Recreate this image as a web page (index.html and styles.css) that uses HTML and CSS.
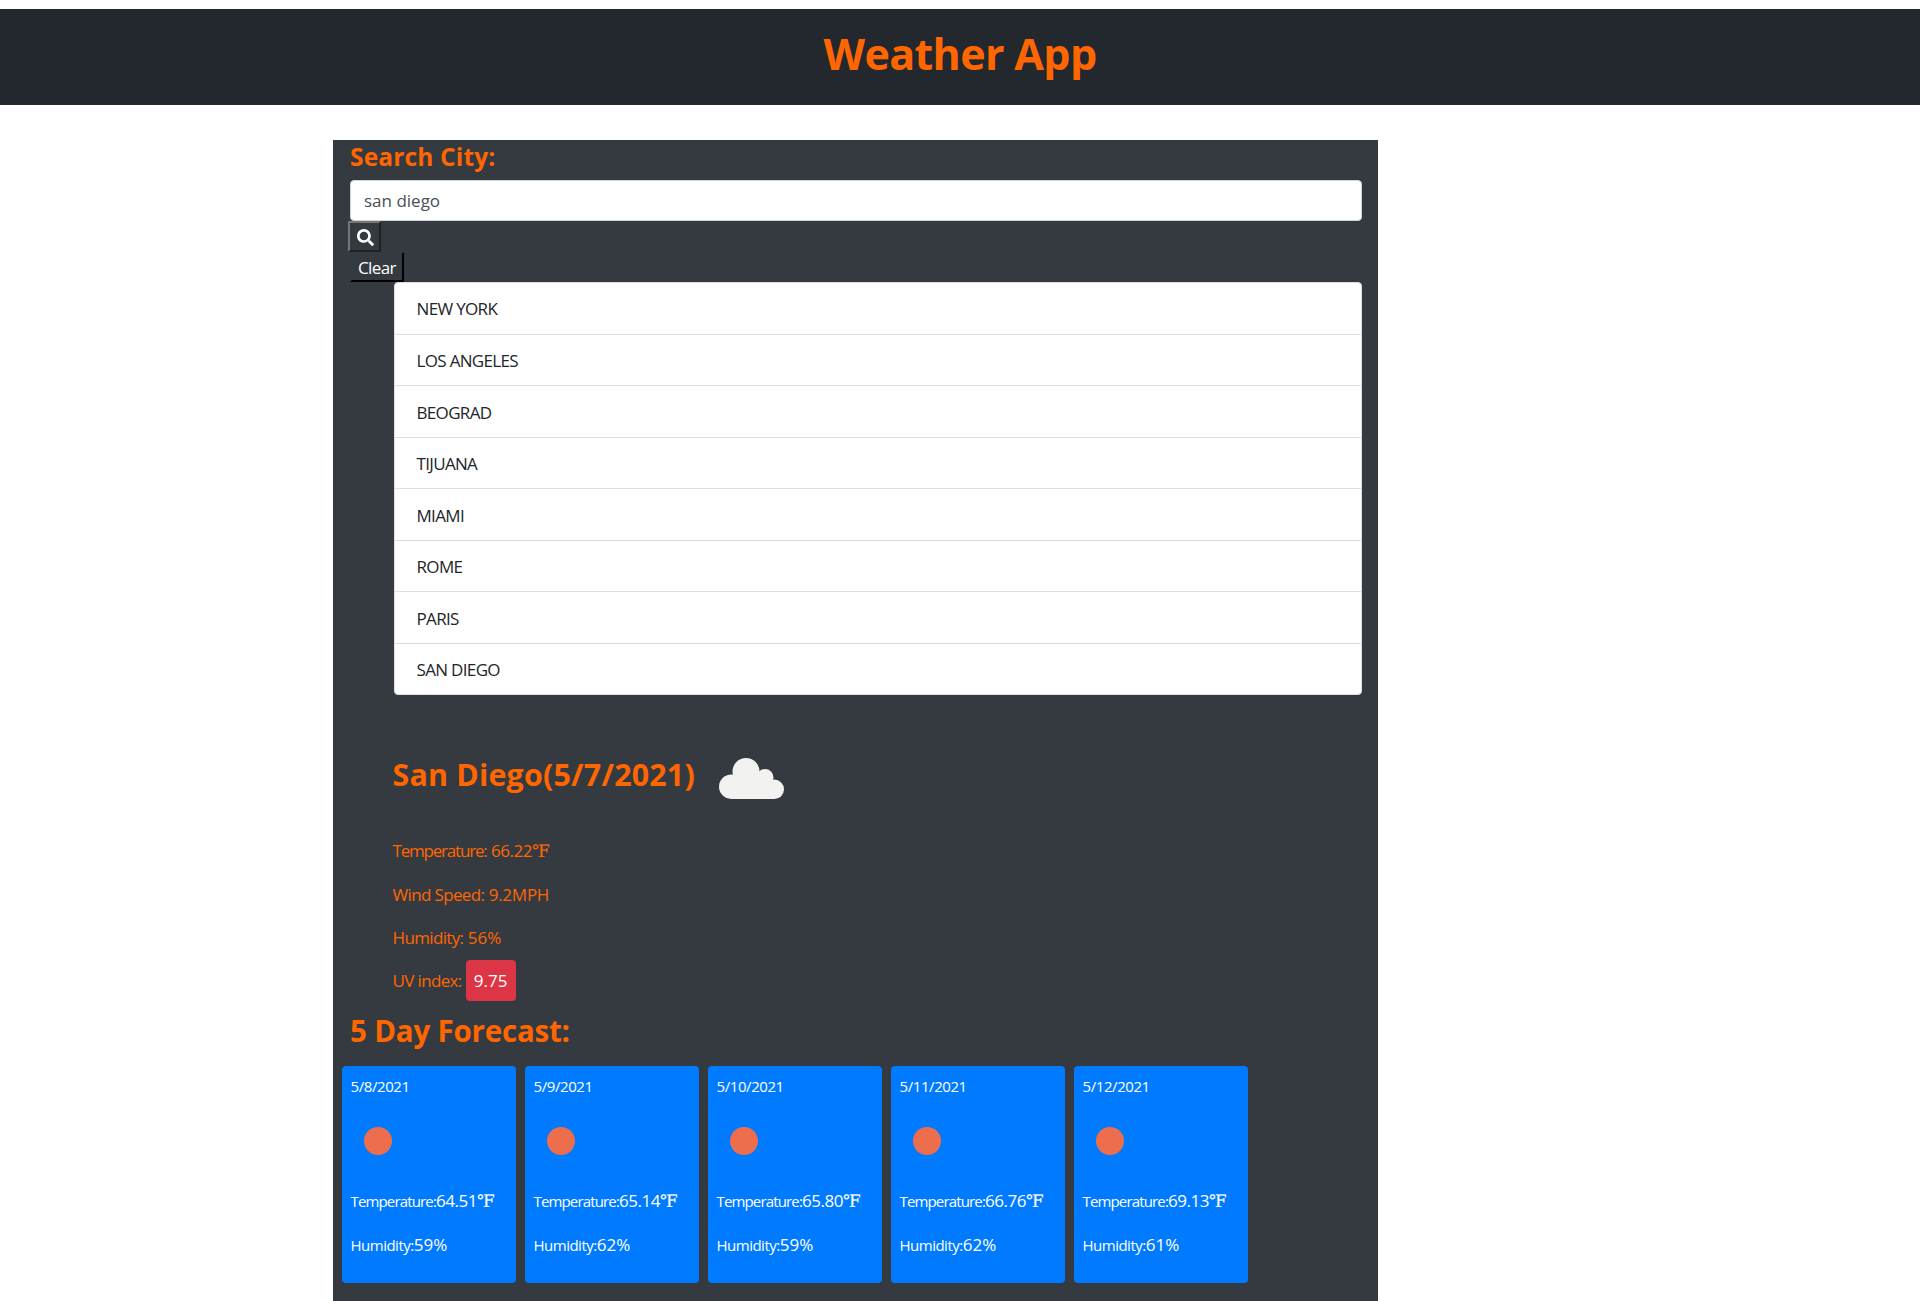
FILE: index.html
```html
<!DOCTYPE html>
<html lang="en">
<head>
<meta charset="utf-8">
<title>Weather App</title>
<link rel="stylesheet" href="styles.css">
</head>
<body>
<header class="header"><h1 class="title">Weather App</h1></header>
<main class="panel">
  <section class="search">
    <h2 class="search-label">Search City:</h2>
    <input class="city-input" type="text" value="san diego" aria-label="City">
    <button class="search-btn" aria-label="Search"><svg viewBox="0 0 512 512"><path fill="#fff" d="M505 442.7L405.3 343c-4.500-4.500-10.600-7-17-7H372c27.600-35.300 44-79.700 44-128C416 93.100 322.900 0 208 0S0 93.100 0 208s93.100 208 208 208c48.300 0 92.700-16.400 128-44v16.300c0 6.400 2.500 12.500 7 17l99.700 99.700c9.400 9.400 24.600 9.400 33.900 0l28.300-28.300c9.400-9.400 9.400-24.600.1-34zM208 336c-70.700 0-128-57.200-128-128 0-70.700 57.200-128 128-128 70.700 0 128 57.200 128 128 0 70.700-57.200 128-128 128z"/></svg></button>
    <button class="clear-btn">Clear</button>
    <ul class="cities">
      <li>NEW YORK</li>
      <li>LOS ANGELES</li>
      <li>BEOGRAD</li>
      <li>TIJUANA</li>
      <li>MIAMI</li>
      <li>ROME</li>
      <li>PARIS</li>
      <li>SAN DIEGO</li>
    </ul>
  </section>
  <section class="current">
    <div class="current-head">
      <h3 class="current-city">San Diego(5/7/2021)</h3>
      <svg class="cloud" viewBox="0 0 65 41"><g fill="#f2f2f0"><circle cx="12.200" cy="28.700" r="12.200"/><circle cx="27" cy="13.500" r="13.500"/><circle cx="46" cy="19.500" r="8.500"/><circle cx="55.300" cy="31.300" r="9.700"/><path d="M12 41V28L20 16H46L55.500 30V41Z"/></g></svg>
    </div>
    <p class="stat"><span class="temp-key">Temperature:</span> <span class="temp-val">66.22</span><span class="deg">℉</span></p>
    <p class="stat"><span class="stat-key">Wind Speed:</span> <span class="wind-val">9.2MPH</span></p>
    <p class="stat"><span class="stat-key">Humidity:</span> 56%</p>
    <p class="stat uv"><span class="stat-key">UV index:</span><span class="badge">9.75</span></p>
  </section>
  <section class="forecast">
    <h3 class="forecast-title">5 Day Forecast:</h3>
    <div class="cards">
      <article class="card"><p class="date">5/8/2021</p><div class="sun"></div><p class="row"><span class="key key-temp">Temperature:</span><span class="temp-val">64.51</span><span class="deg">℉</span></p><p class="row"><span class="key">Humidity:</span>59%</p></article>
      <article class="card"><p class="date">5/9/2021</p><div class="sun"></div><p class="row"><span class="key key-temp">Temperature:</span><span class="temp-val">65.14</span><span class="deg">℉</span></p><p class="row"><span class="key">Humidity:</span>62%</p></article>
      <article class="card"><p class="date">5/10/2021</p><div class="sun"></div><p class="row"><span class="key key-temp">Temperature:</span><span class="temp-val">65.80</span><span class="deg">℉</span></p><p class="row"><span class="key">Humidity:</span>59%</p></article>
      <article class="card"><p class="date">5/11/2021</p><div class="sun"></div><p class="row"><span class="key key-temp">Temperature:</span><span class="temp-val">66.76</span><span class="deg">℉</span></p><p class="row"><span class="key">Humidity:</span>62%</p></article>
      <article class="card"><p class="date">5/12/2021</p><div class="sun"></div><p class="row"><span class="key key-temp">Temperature:</span><span class="temp-val">69.13</span><span class="deg">℉</span></p><p class="row"><span class="key">Humidity:</span>61%</p></article>
    </div>
  </section>
</main>
</body>
</html>
```
FILE: styles.css
```css
* { box-sizing: border-box; }
body {
  margin: 0;
  height: 1301px;
  overflow: hidden;
  padding-top: 9px;
  display: flex;
  flex-direction: column;
  background: #fff;
  color: #ff6600;
  font: 17px/26px "Open Sans", "Noto Sans", sans-serif;
}
h1, h2, h3, p, ul { margin: 0; padding: 0; font-weight: 700; }
p { font-weight: 400; }
.header { height: 96px; flex: none; background: #23272e; text-align: center; }
.title { font-size: 43px; line-height: 60px; padding-top: 15px; letter-spacing: -0.65px; }
.panel { flex: 1; width: 1045px; margin: 35px 0 0 333px; background: #343a40; }
.search { display: flex; flex-direction: column; align-items: flex-start; padding: 0 16px 0 17px; }
.search-label { font-size: 24.5px; line-height: 34px; height: 40px; letter-spacing: 0.15px; }
.city-input {
  width: 100%; height: 41px; padding: 0 13px;
  border: 1px solid #ced4da; border-radius: 4px; background: #fff;
  color: #495057; font: inherit; outline: 0;
}
.search-btn {
  width: 33px; height: 31px; margin-left: -2px; padding: 1px 0 0 1px;
  display: grid; place-items: center;
  border: 2px solid; border-color: #767676 #212121 #212121 #767676;
  background: #343a40;
}
.search-btn svg { width: 17px; height: 17px; display: block; }
.clear-btn {
  width: 54px; height: 30px; padding: 1px 0 0;
  border: 2px solid; border-color: #343a40 #000 #000 #343a40;
  background: #343a40; color: #fff; font: inherit; line-height: 25px; letter-spacing: -0.6px;
}
.cities {
  align-self: stretch; margin-left: 44px; height: 413px; list-style: none;
  display: grid; grid-template-rows: 51.75px repeat(6, 51.5px) 1fr;
  border: 1px solid #dfdfdf; border-radius: 4px; background: #fff; color: #212529;
  font-weight: 400; letter-spacing: -0.67px;
}
.cities li { display: flex; align-items: center; padding: 2px 21.5px 0; border-bottom: 1px solid #dfdfdf; }
.cities li:last-child { border: 0; }
.current { padding: 52px 0 0 59.5px; height: 316px; }
.current-head { display: flex; align-items: center; gap: 24.5px; height: 56px; margin-bottom: 35px; }
.current-city { font-size: 30.4px; line-height: 40px; letter-spacing: 0.2px; }
.cloud { width: 65px; height: 41px; margin-top: 7px; }
.stat { height: 43.7px; white-space: nowrap; }
.temp-key { letter-spacing: -1.2px; }
.stat-key { letter-spacing: -0.65px; }
.temp-val { letter-spacing: -0.45px; }
.wind-val { letter-spacing: -0.25px; }
.deg { font-family: "Liberation Serif", "DejaVu Serif", serif; -webkit-text-stroke: 0.15px; }
.uv { display: flex; gap: 4px; align-items: center; height: 41px; margin-top: -9px; }
.badge { width: 50px; height: 41px; line-height: 42px; text-align: center; border-radius: 4px; background: #dc3545; color: #fff; }
.forecast { padding-left: 9px; }
.forecast-title { font-size: 29.5px; line-height: 40px; height: 55px; padding-left: 8px; letter-spacing: -0.2px; }
.cards { display: flex; gap: 9px; color: #fff; }
.card { width: 174px; height: 217px; padding: 7px 8.5px; border-radius: 4px; background: #007bff; }
.date { font-size: 15px; line-height: 26px; letter-spacing: -0.42px; }
.sun { width: 28px; height: 28px; margin: 28px 0 33px 13.500px; border-radius: 50%; background: #ec6e4c; }
.row { height: 44px; white-space: nowrap; }
.key { font-size: 15px; letter-spacing: -0.5px; }
.key-temp { letter-spacing: -0.85px; }
```
